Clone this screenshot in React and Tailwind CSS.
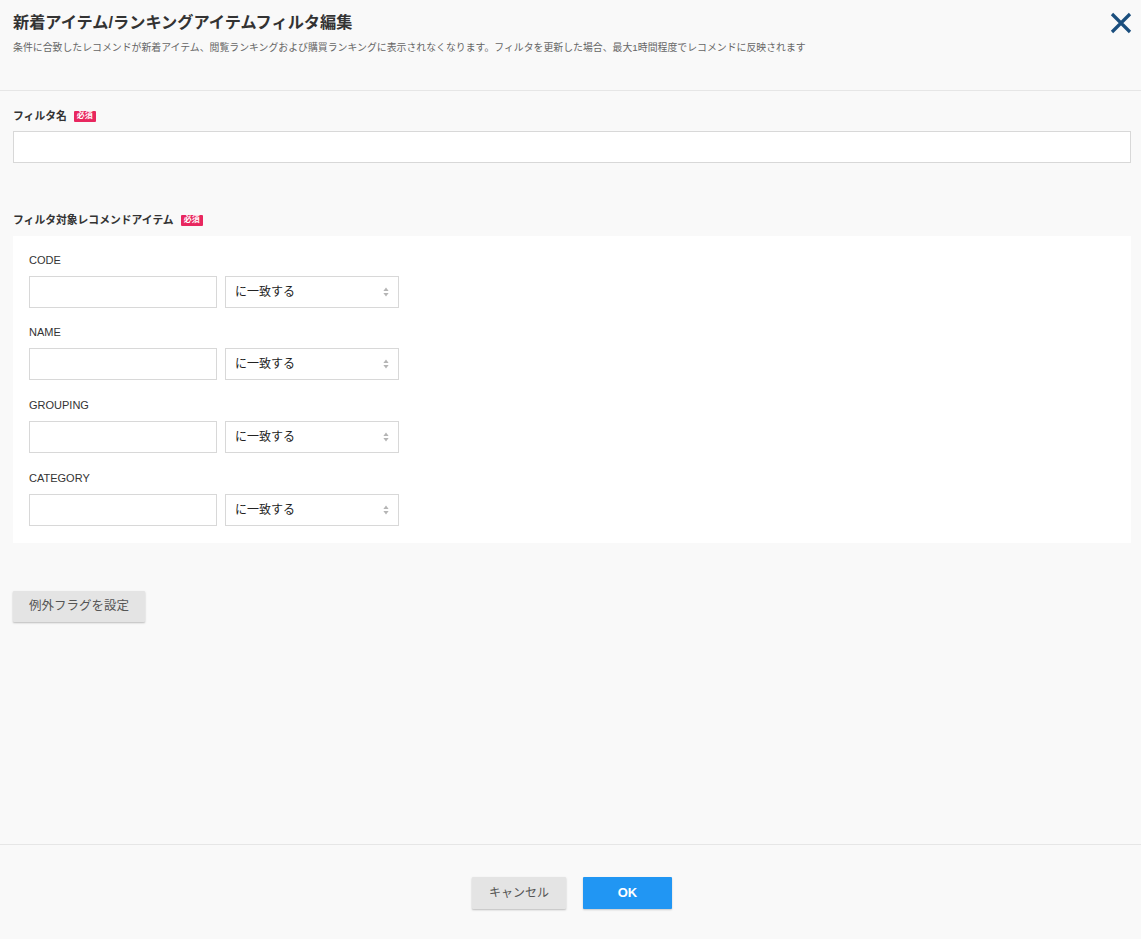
import React from 'react';

const fields = ['CODE', 'NAME', 'GROUPING', 'CATEGORY'];
const rowGap = ['', 'mt-[16px]', 'mt-[17px]', 'mt-[17px]'];

function Required() {
  return (
    <span className="ml-[7px] inline-flex h-[11px] items-center rounded-[1px] bg-[#e8275f] px-[3px] text-[8px] font-bold leading-none text-white">
      必須
    </span>
  );
}

function SelectArrows() {
  return (
    <svg width="6" height="10" viewBox="0 0 6 10" className="absolute right-[9px] top-1/2 -translate-y-1/2">
      <path d="M3 0.5 L5.6 4 L0.4 4 Z" fill="#b5b5b5" />
      <path d="M3 9.5 L5.6 6 L0.4 6 Z" fill="#b5b5b5" />
    </svg>
  );
}

export default function App() {
  return (
    <div
      className="flex min-h-screen flex-col bg-[#f9f9f9] text-[#333]"
      style={{ fontFamily: '"Liberation Sans", "Noto Sans CJK JP", sans-serif' }}
    >
      {/* Header */}
      <div className="relative h-[91px] border-b border-[#e6e6e6] px-[13px] pt-[12px]">
        <h1 className="text-[16.2px] font-bold leading-[20px] text-[#333]">
          新着アイテム/ランキングアイテムフィルタ編集
        </h1>
        <p className="mt-[10px] text-[9.9px] leading-[12px] text-[#666]">
          条件に合致したレコメンドが新着アイテム、閲覧ランキングおよび購買ランキングに表示されなくなります。フィルタを更新した場合、最大1時間程度でレコメンドに反映されます
        </p>
        <button className="absolute right-[9px] top-[12px] h-[22px] w-[22px]">
          <svg width="22" height="22" viewBox="0 0 22 22">
            <path d="M2 2 L20 20 M20 2 L2 20" stroke="#1a4e7d" strokeWidth="3.2" />
          </svg>
        </button>
      </div>

      {/* Body */}
      <div className="flex-1 pl-[13px] pr-[10px] pt-[18px]">
        <div className="flex items-center text-[10.8px] font-bold leading-[14px] text-[#333]">
          フィルタ名
          <Required />
        </div>
        <input className="mt-[8px] block h-[32px] w-full border border-[#d8d8d8] bg-white px-2 text-[12px] outline-none" />

        <div className="mt-[50px] flex items-center text-[10.8px] font-bold leading-[14px] text-[#333]">
          フィルタ対象レコメンドアイテム
          <Required />
        </div>
        <div className="mt-[9px] bg-white px-[16px] pb-[17px] pt-[16px]">
          {fields.map((f, i) => (
            <div key={f} className={rowGap[i]}>
              <div className="text-[11px] leading-[16px] text-[#333]">{f}</div>
              <div className="mt-[8px] flex gap-[8px]">
                <input className="block h-[32px] w-[188px] border border-[#d8d8d8] bg-white px-2 text-[12px] outline-none" />
                <div className="relative flex h-[32px] w-[174px] items-center border border-[#d8d8d8] bg-white pl-[9px] text-[12px] text-[#222]">
                  に一致する
                  <SelectArrows />
                </div>
              </div>
            </div>
          ))}
        </div>

        <button className="mt-[48px] h-[31px] rounded-[1px] bg-[#e4e4e4] px-[16px] text-[12.5px] text-[#555] shadow-[0_1px_2px_rgba(0,0,0,0.25)]">
          例外フラグを設定
        </button>
      </div>

      {/* Footer */}
      <div className="flex h-[95px] items-start justify-center gap-[17px] border-t border-[#e6e6e6] pl-[3px] pt-[32px]">
        <button className="h-[32px] w-[94px] rounded-[1px] bg-[#e4e4e4] text-[12px] text-[#555] shadow-[0_1px_2px_rgba(0,0,0,0.25)]">
          キャンセル
        </button>
        <button className="h-[32px] w-[89px] rounded-[1px] bg-[#2196f3] text-[13px] font-bold text-white shadow-[0_1px_2px_rgba(0,0,0,0.2)]">
          OK
        </button>
      </div>
    </div>
  );
}
